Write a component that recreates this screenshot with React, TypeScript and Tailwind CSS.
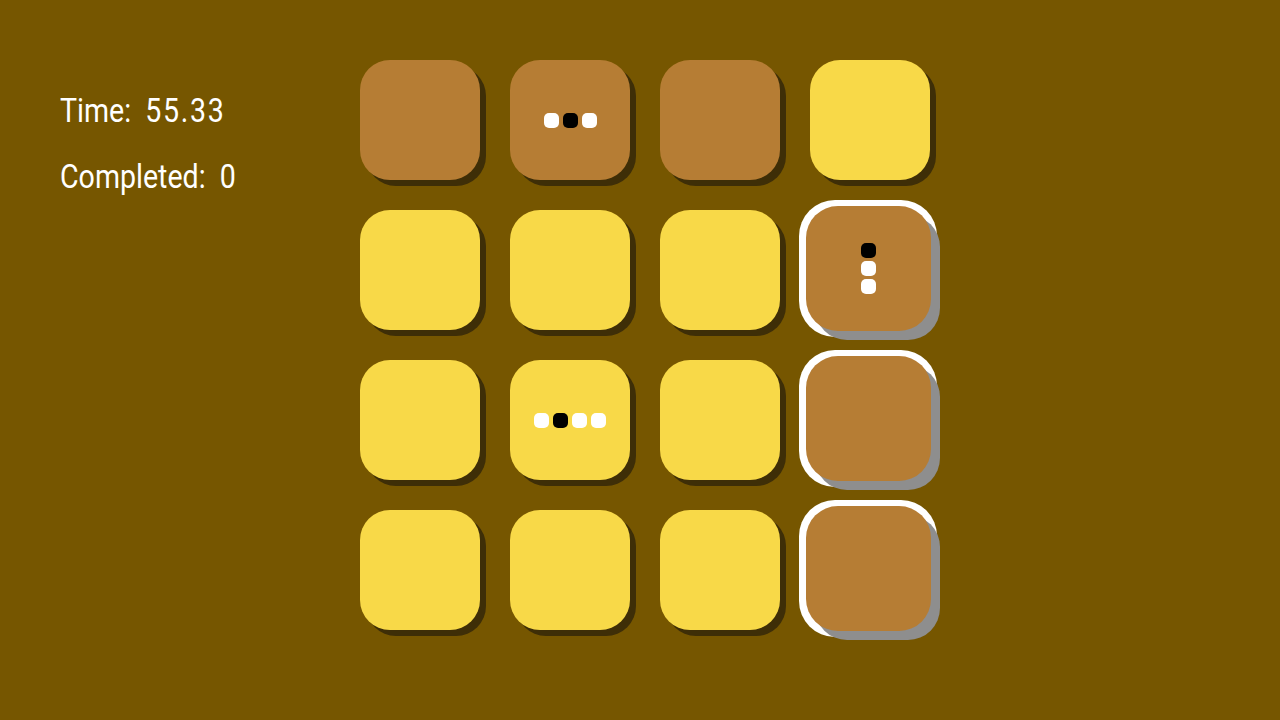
import React from "react";

type Cell = {
  color: "brown" | "yellow";
  selected?: boolean;
  dots?: { dir: "row" | "col"; items: ("w" | "b")[] };
};

const cells: Cell[] = [
  { color: "brown" },
  { color: "brown", dots: { dir: "row", items: ["w", "b", "w"] } },
  { color: "brown" },
  { color: "yellow" },
  { color: "yellow" },
  { color: "yellow" },
  { color: "yellow" },
  { color: "brown", selected: true, dots: { dir: "col", items: ["b", "w", "w"] } },
  { color: "yellow" },
  { color: "yellow", dots: { dir: "row", items: ["w", "b", "w", "w"] } },
  { color: "yellow" },
  { color: "brown", selected: true },
  { color: "yellow" },
  { color: "yellow" },
  { color: "yellow" },
  { color: "brown", selected: true },
];

function Dots({ dots }: { dots: NonNullable<Cell["dots"]> }) {
  return (
    <div
      className={
        dots.dir === "row"
          ? "flex flex-row gap-[4px]"
          : "flex flex-col gap-[3px]"
      }
    >
      {dots.items.map((d, i) => (
        <div
          key={i}
          className={
            "w-[15px] h-[15px] rounded-[5px] " +
            (d === "w" ? "bg-white" : "bg-black")
          }
        />
      ))}
    </div>
  );
}

function Tile({ cell }: { cell: Cell }) {
  const face = cell.color === "brown" ? "bg-[#b67d34]" : "bg-[#f8d948]";

  if (cell.selected) {
    return (
      <div className="relative w-[120px] h-[120px]">
        <div className="absolute left-[-11px] top-[-10px] w-[138px] h-[137px] rounded-[36px] bg-white" />
        <div className="absolute left-[5px] top-[5px] w-[125px] h-[125px] rounded-[32px] bg-[#8e8e8e]" />
        <div
          className={
            "absolute left-[-4px] top-[-4px] w-[125px] h-[125px] rounded-[32px] flex items-center justify-center " +
            face
          }
        >
          {cell.dots && <Dots dots={cell.dots} />}
        </div>
      </div>
    );
  }

  return (
    <div className="relative w-[120px] h-[120px]">
      <div className="absolute left-[6px] top-[6px] w-[120px] h-[120px] rounded-[30px] bg-[#3e2e07]" />
      <div
        className={
          "absolute inset-0 rounded-[30px] flex items-center justify-center " +
          face
        }
      >
        {cell.dots && <Dots dots={cell.dots} />}
      </div>
    </div>
  );
}

export default function App() {
  return (
    <div
      className="w-full h-[720px] bg-[#765600] flex overflow-hidden"
      style={{ fontFamily: 'Roboto, "DejaVu Sans", sans-serif' }}
    >
      <div className="w-[360px] pl-[60px] pt-[90px] flex flex-col items-start gap-[26px] text-white text-[34px] leading-[40px] font-normal">
        <p className="whitespace-pre origin-left scale-x-[0.84]">
          Time:  <span className="tracking-[2px]">55.33</span>
        </p>
        <p className="whitespace-pre origin-left scale-x-[0.84]">Completed:  0</p>
      </div>
      <div className="pt-[60px]">
        <div className="grid grid-cols-[repeat(4,120px)] gap-[30px]">
          {cells.map((c, i) => (
            <Tile key={i} cell={c} />
          ))}
        </div>
      </div>
    </div>
  );
}
